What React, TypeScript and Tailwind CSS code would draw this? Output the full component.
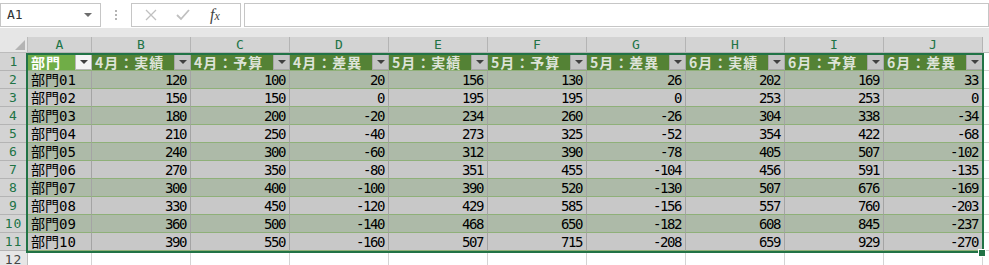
import React from "react";

const cols = ["A", "B", "C", "D", "E", "F", "G", "H", "I", "J"];
const headers = ["部門", "4月：実績", "4月：予算", "4月：差異", "5月：実績", "5月：予算", "5月：差異", "6月：実績", "6月：予算", "6月：差異"];
const data: number[][] = [
  [120, 100, 20, 156, 130, 26, 202, 169, 33],
  [150, 150, 0, 195, 195, 0, 253, 253, 0],
  [180, 200, -20, 234, 260, -26, 304, 338, -34],
  [210, 250, -40, 273, 325, -52, 354, 422, -68],
  [240, 300, -60, 312, 390, -78, 405, 507, -102],
  [270, 350, -80, 351, 455, -104, 456, 591, -135],
  [300, 400, -100, 390, 520, -130, 507, 676, -169],
  [330, 450, -120, 429, 585, -156, 557, 760, -203],
  [360, 500, -140, 468, 650, -182, 608, 845, -237],
  [390, 550, -160, 507, 715, -208, 659, 929, -270],
];

const mono = "font-['DejaVu_Sans_Mono','Noto_Sans_CJK_JP',monospace]";
const jp = "font-['Noto_Sans_CJK_JP',sans-serif]";

function colWidth(i: number) {
  return i === 0 ? "w-[64px]" : "w-[99px]";
}

function FilterButton({ active }: { active?: boolean }) {
  return (
    <div
      className={`w-[17px] h-[16px] shrink-0 flex items-center justify-center border ${
        active ? "bg-[#f4f4f4] border-[#b8b8b8]" : "bg-[#c4c4c4] border-[#a8a8a8]"
      }`}
    >
      <div className="w-0 h-0 border-l-[4px] border-r-[4px] border-t-[4px] border-l-transparent border-r-transparent border-t-[#404040]" />
    </div>
  );
}

export default function App() {
  return (
    <div className="relative w-[989px] h-[265px] overflow-hidden bg-white text-black">
      {/* formula bar */}
      <div className="h-[28px] flex items-start pt-[3px]">
        <div className="w-[101px] h-[24px] border border-[#c6c6c6] flex items-center justify-between pl-[6px] pr-[8px]">
          <span className={`${mono} text-[13px] text-[#333]`}>A1</span>
          <div className="w-0 h-0 border-l-[4px] border-r-[4px] border-t-[4px] border-l-transparent border-r-transparent border-t-[#6d6d6d]" />
        </div>
        <div className="w-[30px] h-[24px] flex flex-col items-center justify-center gap-[2px]">
          <div className="w-[2px] h-[2px] bg-[#b4b4b4]" />
          <div className="w-[2px] h-[2px] bg-[#b4b4b4]" />
          <div className="w-[2px] h-[2px] bg-[#b4b4b4]" />
        </div>
        <div className="w-[110px] h-[24px] border border-[#c6c6c6] flex items-center">
          <svg width="12" height="12" viewBox="0 0 12 12" className="ml-[13px]">
            <path d="M1 1L11 11M11 1L1 11" stroke="#c0c0c0" strokeWidth="1.3" />
          </svg>
          <svg width="14" height="12" viewBox="0 0 14 12" className="ml-[19px]">
            <path d="M1 6L5 10L13 1" stroke="#c0c0c0" strokeWidth="1.8" fill="none" />
          </svg>
          <span className="ml-[20px] font-['Liberation_Serif',serif] italic text-[16px] text-[#444] leading-none">
            f<span className="text-[12px]">x</span>
          </span>
        </div>
        <div className="flex-1 ml-[3px] h-[24px] border border-[#c6c6c6]" />
      </div>
      <div className="h-[9px] bg-[#e6e6e6]" />

      {/* column headers */}
      <div className="flex h-[16px]">
        <div className="relative w-[28px] shrink-0 bg-[#e6e6e6] border-r border-b border-[#bcbcbc]">
          <svg width="10" height="10" viewBox="0 0 10 10" className="absolute right-[2px] bottom-[2px]">
            <polygon points="10,0 10,10 0,10" fill="#b4b4b4" />
          </svg>
        </div>
        {cols.map((c, i) => (
          <div
            key={c}
            className={`${colWidth(i)} shrink-0 bg-[#d3d3d3] border-r border-b border-[#b4b4b4] flex items-center justify-center ${mono} text-[13px] text-[#217346] leading-none`}
          >
            {c}
          </div>
        ))}
        <div className="flex-1 bg-[#e6e6e6] border-b border-[#bcbcbc]" />
      </div>

      {/* row 1: table header */}
      <div className="flex h-[18px]">
        <div className={`w-[28px] shrink-0 bg-[#d3d3d3] border-r border-b border-[#b4b4b4] flex items-center justify-center ${mono} text-[13px] text-[#217346]`}>
          1
        </div>
        {headers.map((h, i) => (
          <div
            key={h}
            className={`${colWidth(i)} shrink-0 flex items-center justify-between pl-[3px] border-b border-[#8fb079] ${
              i === 0 ? "bg-[#70ad47] text-white" : "bg-[#548235] text-[#dde3d8]"
            }`}
          >
            <span className={`${jp} font-bold text-[14px] leading-none tracking-[1px] whitespace-nowrap`}>{h}</span>
            <FilterButton active={i === 0} />
          </div>
        ))}
        <div className="flex-1 border-b border-[#d4d4d4]" />
      </div>

      {/* data rows */}
      {data.map((row, r) => {
        const band = r % 2 === 0;
        const bg = band ? "bg-[#adbaa8]" : "bg-[#c8c8c8]";
        const name = `部門${String(r + 1).padStart(2, "0")}`;
        return (
          <div key={r} className="flex h-[18px]">
            <div className={`w-[28px] shrink-0 bg-[#d3d3d3] border-r border-b border-[#b4b4b4] flex items-center justify-center ${mono} text-[13px] text-[#217346] tracking-[1px]`}>
              {r + 2}
            </div>
            <div className={`w-[64px] shrink-0 ${bg} border-r border-b border-r-[#a4a4a4] border-b-[#8fb079] flex items-center pl-[3px] ${mono} text-[14px] leading-none whitespace-nowrap`}>
              {name}
            </div>
            {row.map((v, i) => (
              <div
                key={i}
                className={`w-[99px] shrink-0 ${bg} border-r border-b border-r-[#a4a4a4] border-b-[#8fb079] flex items-center justify-end pr-[4px] ${mono} text-[14px] leading-none tracking-[-1.4px]`}
              >
                {v}
              </div>
            ))}
            <div className="flex-1 border-b border-[#d4d4d4]" />
          </div>
        );
      })}

      {/* row 12 */}
      <div className="flex h-[18px]">
        <div className={`w-[28px] shrink-0 bg-[#e6e6e6] border-r border-[#bcbcbc] flex items-center justify-center ${mono} text-[13px] text-[#444] tracking-[1px]`}>
          12
        </div>
        {cols.map((c, i) => (
          <div key={c} className={`${colWidth(i)} shrink-0 border-r border-[#d4d4d4]`} />
        ))}
        <div className="flex-1" />
      </div>

      {/* selection outline */}
      <div className="absolute left-[26px] top-[53px] w-[958px] h-[200px] border-2 border-[#217346] pointer-events-none" />
      <div className="absolute left-[978px] top-[249px] w-[8px] h-[8px] bg-[#217346] border border-white" />
    </div>
  );
}
